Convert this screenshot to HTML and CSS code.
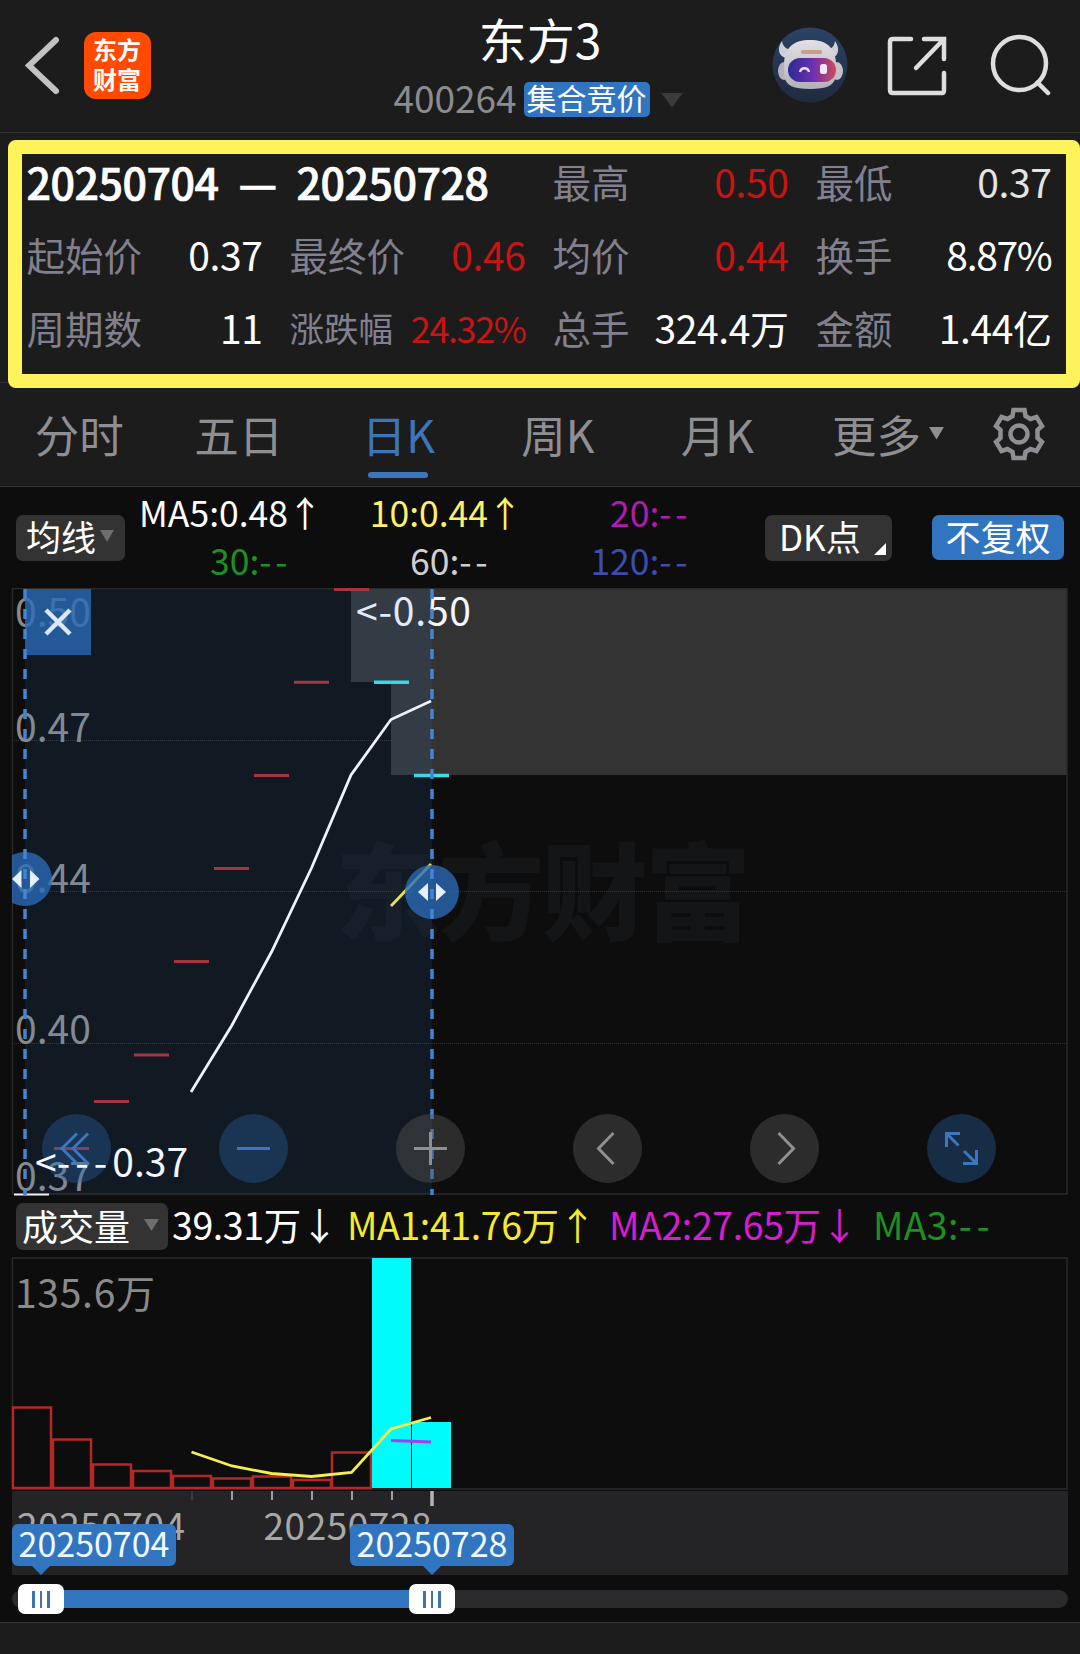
FILE: index.html
```html
<!DOCTYPE html>
<html lang="zh-CN">
<head>
  <meta charset="UTF-8">
  <title>东方3 400264</title>
  <link rel="stylesheet" href="styles.css">
</head>
<body>

  <header class="header">
    <div class="header-left">
      <svg class="back" width="36" height="60" viewBox="0 0 36 60">
        <path d="M31 5 L4 30.5 L31 56"/>
      </svg>
      <div class="logo"><span>东方</span><span>财富</span></div>
    </div>
    <div class="header-title">
      <h1>东方3</h1>
      <div class="subtitle">
        <span class="code">400264</span>
        <span class="badge">集合竞价</span>
        <svg width="22" height="14" viewBox="0 0 22 14"><path d="M0 0H22L11 14Z" fill="#3b3b3b"/></svg>
      </div>
    </div>
    <div class="header-right">
      <svg width="76" height="76" viewBox="0 0 76 76">
        <defs>
          <linearGradient id="sky" x1="0" y1="0" x2="0" y2="1">
            <stop offset="0" stop-color="#2d4266"/>
            <stop offset="1" stop-color="#1e2a3e"/>
          </linearGradient>
          <linearGradient id="visor" x1="0" y1="0" x2="1" y2="0">
            <stop offset="0" stop-color="#2c2a92"/>
            <stop offset="0.5" stop-color="#6a2fb0"/>
            <stop offset="1" stop-color="#d0485c"/>
          </linearGradient>
          <linearGradient id="helmet" x1="0" y1="0" x2="0" y2="1">
            <stop offset="0" stop-color="#e2e0e6"/>
            <stop offset="1" stop-color="#b4b0b8"/>
          </linearGradient>
        </defs>
        <circle cx="38" cy="38" r="37.5" fill="url(#sky)"/>
        <path d="M10 14C5 21 6 29 14 31L20 22C15 23 11 20 10 14Z" fill="#cfcfdb"/>
        <path d="M63 14C68 21 67 29 60 31L54 22C59 23 62 20 63 14Z" fill="#cfcfdb"/>
        <ellipse cx="12" cy="44" rx="6" ry="9" fill="#b4b1ba"/>
        <ellipse cx="65" cy="44" rx="6" ry="9" fill="#c4c1c9"/>
        <path d="M12 36C13 20 22 13 38 13S63 20 64 36V48C63 59 54 62 38 62S13 59 12 48Z" fill="url(#helmet)"/>
        <rect x="29" y="23" width="21" height="4" rx="1.5" fill="#c8a084"/>
        <rect x="16" y="31" width="48" height="24" rx="12" fill="url(#visor)"/>
        <path d="M28 45C29 40 36 40 37 45" fill="none" stroke="#e6e2ff" stroke-width="2.4"/>
        <rect x="48" y="37" width="7" height="10" rx="2.5" fill="#f2e9ff"/>
      </svg>
      <svg class="tool" width="62" height="62" viewBox="0 0 62 62">
        <path d="M24 4H6Q3 4 3 7V55Q3 58 6 58H55Q57 58 57 55V38M37 4H57V24M56 5L29 33"/>
      </svg>
      <svg class="tool" width="64" height="64" viewBox="0 0 64 64">
        <circle cx="31.5" cy="31.5" r="26.5"/>
        <path d="M49.5 50.5L60 61"/>
      </svg>
    </div>
  </header>

  <section class="panel">
    <div class="stats">
      <div class="range"><span>20250704</span><span>—</span><span>20250728</span></div>
      <div class="stat"><span>最高</span><b class="red">0.50</b></div>
      <div class="stat"><span>最低</span><b class="soft">0.37</b></div>
      <div class="stat"><span>起始价</span><b>0.37</b></div>
      <div class="stat"><span>最终价</span><b class="red">0.46</b></div>
      <div class="stat"><span>均价</span><b class="red">0.44</b></div>
      <div class="stat"><span>换手</span><b class="tight">8.87%</b></div>
      <div class="stat"><span>周期数</span><b>11</b></div>
      <div class="stat small"><span>涨跌幅</span><b class="red">24.32%</b></div>
      <div class="stat"><span>总手</span><b>324.4万</b></div>
      <div class="stat"><span>金额</span><b>1.44亿</b></div>
    </div>
  </section>

  <nav class="tabs">
    <a>分时</a>
    <a>五日</a>
    <a class="active">日K</a>
    <a>周K</a>
    <a>月K</a>
    <a class="more">更多<svg width="16" height="13" viewBox="0 0 16 13"><path d="M0 0H15L7.5 12.5Z" fill="#8e8e93"/></svg></a>
    <svg class="gear" width="54" height="54" viewBox="0 0 54 54">
      <path d="M21.5 3H32.5L33.5 9L38.5 12L44.5 10L50 19L45.5 23V31L50 35L44.5 44L38.5 42L33.5 45L32.5 51H21.5L20.5 45L15.5 42L9.5 44L4 35L8.5 31V23L4 19L9.5 10L15.5 12L20.5 9Z"/>
      <circle cx="27" cy="27" r="8.5"/>
    </svg>
  </nav>

  <main class="charts">
    <div class="ma-bar">
      <div class="btn avg">均线<svg width="15" height="12" viewBox="0 0 15 12"><path d="M0 0H14L7 12Z" fill="#6e6e6e"/></svg></div>
      <div class="ma-grid">
        <span class="white">MA5:0.48</span><i class="white">↑</i>
        <span class="yellow">10:0.44</span><i class="yellow">↑</i>
        <span class="purple">20:<em>--</em></span><i></i>
        <span class="green">30:<em>--</em></span><i></i>
        <span class="grey">60:<em>--</em></span><i></i>
        <span class="blue">120:<em>--</em></span><i></i>
      </div>
      <div class="btn dk">DK点<svg width="12" height="12" viewBox="0 0 12 12"><path d="M12 0V12H0Z" fill="#fff"/></svg></div>
      <div class="btn adjust">不复权</div>
    </div>

    <!-- K line, 40px per day, 46.6px per 0.01 -->
    <svg class="chart" width="1080" height="608" viewBox="0 588 1080 608">
      <defs>
        <clipPath id="plot"><rect x="12" y="588" width="1056" height="608"/></clipPath>
      </defs>
      <rect class="gap" x="351" y="589" width="716" height="93"/>
      <rect class="gap" x="391" y="682" width="676" height="93"/>
      <text class="watermark" x="335" y="932" textLength="416">东方财富</text>
      <g class="grid">
        <path d="M12 740.5H391M12 891.5H1067M12 1043.5H1067"/>
      </g>
      <rect class="frame" x="12.5" y="588.5" width="1054.5" height="605.5"/>

      <g class="axis-label">
        <text x="15" y="627">0.50</text>
        <text x="15" y="741.5">0.47</text>
        <text x="15" y="892.5">0.44</text>
        <text x="15" y="1044">0.40</text>
        <text x="15" y="1191">0.37</text>
      </g>

      <path class="flat" d="M14 1194.5H49"/>
      <path class="up" d="M54 1148.5H89M94 1101.5H129M134 1055H169M174 961.5H209M214 868.5H249M254 775.5H289M294 682.3H329M334 589.5H369"/>
      <path class="down" d="M374 682.3H409M414 775.5H449"/>
      <polyline class="ma5" points="191,1092 231.5,1026 271.5,952 311.5,868 351,775 391,719.5 431,701"/>
      <polyline class="ma10" points="391,906 431,864"/>
      <text class="mark" x="356" y="626" textLength="115">&lt;-0.50</text>

      <!-- selected range -->
      <rect x="25" y="589" width="407" height="605" fill="#3c8ce6" fill-opacity="0.1"/>
      <g clip-path="url(#plot)" class="handle">
        <rect x="25" y="589" width="66" height="66"/>
        <circle cx="25" cy="879" r="27"/>
        <circle cx="432" cy="892" r="27"/>
      </g>
      <path class="cursor" d="M25 589V1195M432 589V1195"/>
      <path class="close" d="M46 610L70 634M70 610L46 634"/>
      <path class="arrows" d="M21.5 870V888L12 879ZM30 870V888L39.5 879ZM428 883V901L418 892ZM436 883V901L446 892Z"/>

      <g class="tools">
        <circle class="on" cx="76.5" cy="1148.5" r="34.5"/>
        <circle class="on" cx="253.5" cy="1148.5" r="34.5"/>
        <circle cx="430.5" cy="1148.5" r="34.5"/>
        <circle cx="607.5" cy="1148.5" r="34.5"/>
        <circle cx="784.5" cy="1148.5" r="34.5"/>
        <circle class="on" cx="961.5" cy="1148.5" r="34.5"/>
        <path class="on" d="M77 1133.5L62 1148.5L77 1163.5M88 1133.5L73 1148.5L88 1163.5M237 1148.5H270M960 1133.5H946.5V1147M947 1134L958.5 1145.5M963 1163.5H976.5V1150M976 1163L964 1151"/>
        <path d="M414 1148.5H447M430.5 1132V1165M613.5 1133L598.5 1148.5L613.5 1164M778.5 1133L793.5 1148.5L778.5 1164"/>
      </g>
      <text class="mark" x="35" y="1177">&lt;<tspan letter-spacing="5">---</tspan>0.37</text>
    </svg>

    <div class="vol-bar">
      <div class="btn vol">成交量<svg width="15" height="12" viewBox="0 0 15 12"><path d="M0 0H15L7.5 12Z" fill="#6e6e6e"/></svg></div>
      <span class="v0">39.31万↓</span>
      <span class="v1">MA1:41.76万↑</span>
      <span class="v2">MA2:27.65万↓</span>
      <span class="v3">MA3:<em>--</em></span>
    </div>

    <div class="volume">
      <svg class="chart" width="1080" height="318" viewBox="0 1257 1080 318">
        <rect class="frame" x="12.5" y="1258" width="1054.5" height="231"/>
        <text class="axis-label" x="15" y="1307.5" textLength="140">135.6万</text>
        <path class="bars" d="M13 1488V1407.5H51V1488ZM53 1488V1439.5H91V1488ZM93 1488V1464.5H131V1488ZM133 1488V1471H171V1488ZM173 1488V1476H211V1488ZM213 1488V1478.5H251V1488ZM253 1488V1476.5H291V1488ZM293 1488V1480H331V1488ZM332 1488V1452.5H371V1488Z"/>
        <path fill="#00fbfb" d="M372 1258H411V1488H372ZM412 1422H451V1488H412Z"/>
        <polyline class="ma10" points="191.5,1452 232,1466 271.5,1473.5 311.5,1476.5 351.5,1472.5 391,1429 431,1417.5"/>
        <path d="M391 1440.5L431 1442" stroke="#a340ea" stroke-width="3"/>
        <rect x="12" y="1491" width="1056" height="84" fill="#242426"/>
        <path d="M192 1491V1500" stroke="#3c3c3e" stroke-width="2"/>
        <path d="M232 1491V1500M272 1491V1500M312 1491V1500M352 1491V1500M392 1491V1500" stroke="#a0a0a0" stroke-width="2"/>
        <path d="M432 1491V1506" stroke="#b4b4b4" stroke-width="3.5"/>
        <text class="date" x="17" y="1539.5" textLength="168">20250704</text>
        <text class="date" x="263.5" y="1539.5" textLength="168">20250728</text>
      </svg>
      <div class="tip from">20250704</div>
      <div class="tip to">20250728</div>
    </div>

    <div class="slider">
      <div class="track">
        <div class="fill"></div>
        <div class="knob left"><i></i><i></i><i></i></div>
        <div class="knob right"><i></i><i></i><i></i></div>
      </div>
    </div>
  </main>

</body>
</html>
```
FILE: styles.css
```css
* {
  box-sizing: border-box;
}
body {
  margin: 0;
  width: 1080px;
  height: 1654px;
  overflow: hidden;
  background: #1c1c1c;
  color: #fff;
  font-family: "Noto Sans CJK SC", sans-serif;
}
svg {
  display: block;
  flex: none;
}
i, em {
  font-style: normal;
}

/* header */
.header {
  display: grid;
  grid-template-columns: 1fr auto 1fr;
  height: 133px;
  border-bottom: 1px solid #333;
}
.header-left {
  display: flex;
  align-items: flex-start;
  padding: 32px 0 0 25px;
}
.back {
  margin-top: 3px;
  fill: none;
  stroke: #c2c2c2;
  stroke-width: 6;
  stroke-linecap: round;
}
.logo {
  display: flex;
  flex-direction: column;
  align-items: center;
  width: 67px;
  height: 67px;
  margin-left: 22.5px;
  padding-top: 2px;
  border-radius: 12px;
  background: #ff4a00;
  font-size: 24px;
  font-weight: 700;
  line-height: 29.5px;
}
.header-title {
  text-align: center;
}
.header-title h1 {
  margin: 8px 0 0;
  font-size: 48px;
  font-weight: 400;
  line-height: 60px;
}
.subtitle {
  display: flex;
  align-items: center;
  height: 35px;
  margin-top: 14px;
  padding-right: 4px;
}
.code {
  color: #8b8b90;
  font-size: 37px;
  line-height: 35px;
  margin-top: -4px;
}
.badge {
  width: 126px;
  height: 35px;
  margin: 0 11px 0 7px;
  border-radius: 5px;
  background: #3174c0;
  font-size: 30px;
  line-height: 31px;
}
.header-right {
  display: flex;
  justify-content: flex-end;
  align-items: flex-start;
  gap: 38px;
  padding: 27px 28px 0 0;
}
.header-right svg:first-child {
  margin-right: 1px;
}
.tool {
  margin-top: 8px;
  fill: none;
  stroke: #dedede;
  stroke-width: 4.5;
  stroke-linecap: round;
}
.tool:last-child {
  margin: 5px 0 0 1px;
}

/* range statistics */
.panel {
  height: 250px;
  padding: 7px 0 0 7.5px;
  border-bottom: 1px solid #2c2c2c;
}
.stats {
  display: grid;
  grid-template-columns: repeat(4, 236px);
  grid-template-rows: 55px 91px 55px;
  column-gap: 27px;
  width: 1072.5px;
  height: 248px;
  padding: 0 0 0 5px;
  border: 14px solid #fff35c;
  border-radius: 8px;
}
.range, .stat {
  display: flex;
  justify-content: space-between;
  align-items: center;
  white-space: nowrap;
  line-height: 55px;
}
.range {
  grid-column: span 2;
  width: 462px;
  font-size: 43px;
  font-weight: 500;
  letter-spacing: -0.5px;
  -webkit-text-stroke: 0.7px #fff;
}
.stat {
  color: #82808e;
  font-size: 38.5px;
}
.stat b {
  color: #fff;
  font-size: 39px;
  font-weight: 400;
  letter-spacing: -0.4px;
}
.stat .tight {
  letter-spacing: -1.3px;
}
.stat .red {
  color: #c81414;
}
.stat .soft {
  color: #e4e4e4;
}
.stat.small span {
  font-size: 34.5px;
}
.stat.small b {
  font-size: 36px;
  letter-spacing: -1.4px;
}

/* period tabs */
.tabs {
  display: flex;
  height: 104px;
  border-bottom: 1px solid #333;
  color: #8e8e93;
  font-size: 44.5px;
}
.tabs a {
  position: relative;
  width: 159.5px;
  padding-right: 1px;
  line-height: 102px;
  text-align: center;
}
.tabs .active {
  color: #3c76b8;
}
.tabs .active::after {
  content: "";
  position: absolute;
  left: 49px;
  bottom: 8px;
  width: 60px;
  height: 6px;
  border-radius: 3px;
  background: #3c76b8;
}
.tabs .more {
  display: flex;
  justify-content: center;
  align-items: center;
  gap: 8px;
  width: 183px;
  height: 101px;
}
.gear {
  margin: 24px 0 0 11px;
  fill: none;
  stroke: #8e8e93;
  stroke-width: 4.5;
}

/* moving averages */
.charts {
  height: 1136px;
  background: #0d0d0d;
}
.ma-bar {
  display: flex;
  align-items: center;
  height: 101px;
  padding-left: 16px;
}
.btn {
  display: flex;
  align-items: center;
  height: 46px;
  padding-bottom: 3px;
  border-radius: 7px;
  background: #333;
  font-size: 35px;
  line-height: 42px;
  white-space: nowrap;
}
.avg {
  width: 109px;
  padding-left: 10px;
  gap: 4px;
}
.ma-grid {
  display: grid;
  grid-template-columns: 163px 37px 163px 37px 163px 37px;
  grid-auto-rows: 48px;
  width: 640px;
  font-size: 35.5px;
  line-height: 48px;
  text-align: right;
  margin: -4px 0 0;
}
.ma-grid i {
  margin-left: -3px;
  text-align: center;
}
em {
  letter-spacing: 3.5px;
}
.ma-grid em {
  margin-right: -3px;
}
.white { color: #fff; }
.yellow { color: #fff06a; }
.purple { color: #b01cae; }
.green { color: #1f8f22; }
.grey { color: #cfcfcf; }
.blue { color: #3c4cb0; }
.dk {
  align-items: flex-end;
  width: 127px;
  padding: 0 6px 6px 14px;
  justify-content: space-between;
  line-height: 39px;
  font-size: 35px;
}
.adjust {
  justify-content: center;
  width: 132px;
  height: 45px;
  margin-left: 40px;
  background: #3174c0;
}

/* charts */
.chart {
  font-size: 39px;
}
.frame {
  fill: none;
  stroke: #2a2a2a;
  stroke-width: 1.5;
}
.gap {
  fill: #333;
}
.grid path {
  stroke: #303134;
  stroke-width: 1;
  stroke-dasharray: 1 1;
}
.watermark {
  fill: #141516;
  font-size: 106px;
  font-weight: 900;
}
.axis-label {
  fill: #8a8a8a;
}
.mark {
  fill: #f2f6ff;
}
.flat {
  stroke: #f0f0f0;
  stroke-width: 2;
}
.up {
  stroke: #b02c32;
  stroke-width: 3;
}
.down {
  stroke: #3ce0e4;
  stroke-width: 3.5;
}
.ma5, .ma10 {
  fill: none;
  stroke: #fff;
  stroke-width: 2.8;
}
.ma10 {
  stroke: #f8ee4c;
}
.handle {
  fill: #2a6cb9;
  fill-opacity: 0.78;
}
.cursor {
  fill: none;
  stroke: #4484d0;
  stroke-width: 3.5;
  stroke-dasharray: 10 10;
}
.close {
  stroke: #dce8fa;
  stroke-width: 4.5;
}
.arrows {
  fill: #e6f0ff;
}
.tools circle {
  fill: #585858;
  fill-opacity: 0.42;
}
.tools circle.on {
  fill: #2a67ac;
  fill-opacity: 0.36;
}
.tools path {
  fill: none;
  stroke: #909090;
  stroke-width: 3;
}
.tools path.on {
  stroke: #3c76bc;
}

/* volume */
.vol-bar {
  display: flex;
  align-items: center;
  height: 61px;
  padding-left: 16px;
  font-size: 37.5px;
  line-height: 56px;
  letter-spacing: -0.4px;
  white-space: nowrap;
}
.vol-bar span {
  margin-top: -5px;
}
.vol {
  width: 152px;
  height: 47px;
  padding-left: 6px;
  gap: 14px;
  letter-spacing: 0;
  font-size: 36px;
}
.v0 { width: 177px; padding-left: 4px; }
.v1 { width: 262px; padding-left: 2px; color: #f6ea2c; }
.v2 { width: 263px; padding-left: 2px; color: #d81cd4; }
.v3 { padding-left: 3px; color: #1f8f22; letter-spacing: 0.3px; }
.v3 em { letter-spacing: 5px; }
.volume {
  position: relative;
}
.bars {
  fill: none;
  stroke: #b42828;
  stroke-width: 2.5;
}
.date {
  fill: #a8a8a8;
  font-size: 37px;
}
.tip {
  position: absolute;
  top: 267px;
  width: 164px;
  height: 42px;
  border-radius: 6px;
  background: #3174c0;
  color: #eefaff;
  font-size: 34px;
  line-height: 38px;
  text-align: center;
}
.tip::after {
  content: "";
  position: absolute;
  top: 42px;
  border: 9px solid transparent;
  border-top-color: #3174c0;
  border-bottom: 0;
}
.from { left: 12px; }
.from::after { left: 20px; }
.to { left: 350px; }
.to::after { left: 73px; }

/* range slider */
.slider {
  height: 48px;
  padding: 15px 12px 0 12px;
  border-bottom: 1px solid #333;
}
.track {
  position: relative;
  height: 18px;
  border-radius: 9px;
  background: #2a2a2c;
}
.fill {
  width: 391px;
  height: 18px;
  margin-left: 29px;
  background: #3174c0;
}
.knob {
  position: absolute;
  top: -6px;
  display: flex;
  justify-content: center;
  align-items: center;
  gap: 5px;
  width: 46px;
  height: 30px;
  border-radius: 7px;
  background: #fff;
}
.knob i {
  width: 2.5px;
  height: 17px;
  background: #3f72ad;
}
.left { left: 6px; }
.right { left: 397px; }
```
